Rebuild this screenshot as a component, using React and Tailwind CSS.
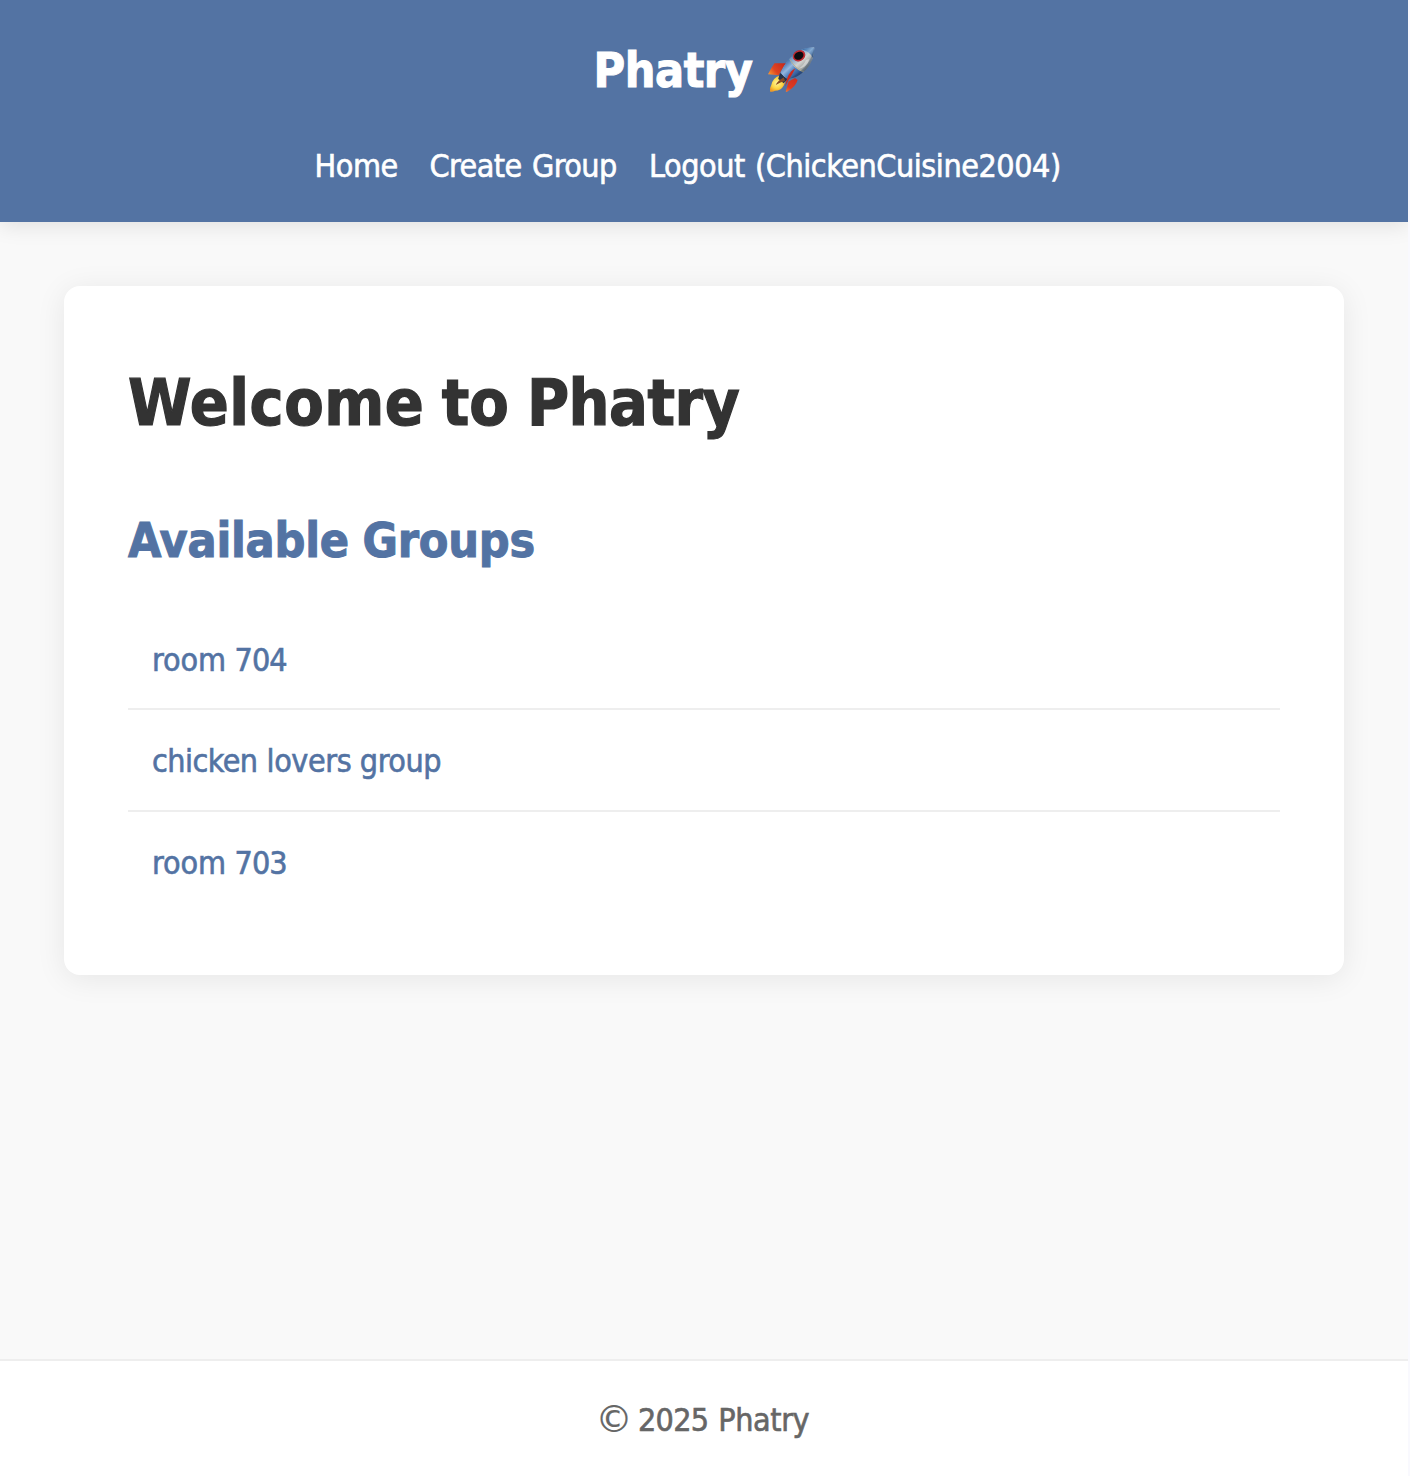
const groups = [
  {
    id: 1,
    pad: 'pt-[26px] pb-[22px]',
    words: [['room', 'tracking-[-0.1px]'], ['704', 'tracking-[-0.9px] ml-[8.5px]']],
  },
  {
    id: 2,
    pad: 'pt-[25px] pb-[23px]',
    words: [
      ['chicken', 'tracking-[-0.55px]'],
      ['lovers', 'tracking-[-0.4px] ml-[9px]'],
      ['group', 'tracking-[-0.5px] ml-[8.5px]'],
    ],
  },
  {
    id: 3,
    pad: 'pt-[25px] pb-[23px]',
    words: [['room', 'tracking-[-0.1px]'], ['703', 'tracking-[-0.9px] ml-[8.5px]']],
  },
];

function Rocket() {
  return (
    <svg viewBox="0 0 60 60" className="mt-2 ml-[7.5px] h-[60px] w-[60px] shrink-0" aria-hidden="true">
      <defs>
        <linearGradient id="hull" x1="29" y1="14" x2="46" y2="32" gradientUnits="userSpaceOnUse">
          <stop offset="0" stopColor="#3f6fa8" />
          <stop offset="0.3" stopColor="#8aacd0" />
          <stop offset="0.55" stopColor="#d2d2cf" />
          <stop offset="0.78" stopColor="#a3a7a5" />
          <stop offset="1" stopColor="#59656c" />
        </linearGradient>
        <linearGradient id="base" x1="22" y1="24" x2="35" y2="38" gradientUnits="userSpaceOnUse">
          <stop offset="0" stopColor="#3767a6" />
          <stop offset="0.4" stopColor="#94b6dd" />
          <stop offset="0.65" stopColor="#4f7fbd" />
          <stop offset="1" stopColor="#274c88" />
        </linearGradient>
        <linearGradient id="nose" x1="43" y1="7" x2="54" y2="18" gradientUnits="userSpaceOnUse">
          <stop offset="0" stopColor="#2b619f" />
          <stop offset="0.5" stopColor="#82a9d2" />
          <stop offset="1" stopColor="#2d5080" />
        </linearGradient>
        <linearGradient id="finLeft" x1="24" y1="23" x2="9" y2="35" gradientUnits="userSpaceOnUse">
          <stop offset="0" stopColor="#c62a1c" />
          <stop offset="0.6" stopColor="#df4420" />
          <stop offset="1" stopColor="#f79a35" />
        </linearGradient>
        <linearGradient id="finRight" x1="35" y1="36" x2="27" y2="52" gradientUnits="userSpaceOnUse">
          <stop offset="0" stopColor="#cf2c1f" />
          <stop offset="0.7" stopColor="#dc3a22" />
          <stop offset="1" stopColor="#ee7435" />
        </linearGradient>
        <radialGradient id="flame" cx="17" cy="43" r="9" gradientUnits="userSpaceOnUse">
          <stop offset="0" stopColor="#fff59a" />
          <stop offset="0.6" stopColor="#fbd544" />
          <stop offset="1" stopColor="#ef9a26" />
        </radialGradient>
      </defs>
      <path d="M26 23.2 L14.5 23.3 Q11 28 8 34.2 L18.8 35.3 Q21 30 26 23.2Z" fill="url(#finLeft)" />
      <path d="M35 38 L37.6 40 Q36 46.5 26.8 52 L25.7 51.6 L28.6 41.5Z" fill="url(#finRight)" />
      <path d="M20 35.5 Q13 37.5 11.3 45 Q9.5 48 10 51.4 Q12.5 52.2 15 50.8 Q21 50.8 23.8 45.5 L26 40Z" fill="url(#flame)" />
      <path d="M20 33 L28 39 L23.5 43.2 Q21 40.5 18.2 39Z" fill="#24334b" />
      <path d="M15.8 45 Q18 40 23.8 37.5 L25 41 Q20.5 42 15.8 45Z" fill="#8a4a22" />
      <path d="M54.2 7.6 Q43 7.2 34.5 14 Q26 20.5 20.8 32.5 Q23.5 37 28 39.2 Q37.5 38 46 29.5 Q54.5 20.5 54.2 7.6Z" fill="url(#hull)" />
      <path d="M29 19 Q24 25 20.8 32.5 Q23.5 37 28 39.2 Q36.5 38 42.8 32.5 Q34.5 29 29 19Z" fill="url(#base)" />
      <path d="M54.2 7.6 Q47 7.2 41.8 9.6 Q49.5 11.5 53 18 Q54.4 12.5 54.2 7.6Z" fill="url(#nose)" />
      <path d="M30 19.5 Q35 28.5 43.6 31.6" fill="none" stroke="#b9ab78" strokeWidth="0.7" />
      <path d="M46 20 Q44 25 39 28.5 Q44 28 47.5 23.5 Q49 21 49 19Z" fill="#ffffff" opacity="0.4" />
      <path d="M54 8 Q54 20.5 46 29.5 Q37.5 38 28 39.2 Q37 35 44.5 27.5 Q51.5 20 54 8Z" fill="#2c4466" opacity="0.35" />
      <ellipse cx="39" cy="15.8" rx="6.5" ry="5.3" transform="rotate(-28 39 15.8)" fill="#ad1c22" />
      <ellipse cx="39" cy="15.8" rx="5.8" ry="4.6" transform="rotate(-28 39 15.8)" fill="none" stroke="#d23c43" strokeWidth="0.6" />
      <ellipse cx="38.8" cy="15.8" rx="4.8" ry="3.8" transform="rotate(-28 38.8 15.8)" fill="#0d0c10" />
      <path d="M35.2 28.4 Q33 33 28.3 40.5 L25.2 46.5 Q26.5 37 31 31.5 Q33 29.2 35.2 28.4Z" fill="#cf2a1d" />
    </svg>
  );
}

export default function App() {
  return (
    <div className="min-h-screen bg-[#f9f9fe] font-['DejaVu_Sans_Condensed','DejaVu_Sans',sans-serif] text-[32px] leading-[52px] whitespace-nowrap">
      <div className="flex min-h-screen w-[1408px] flex-col overflow-hidden bg-[#f9f9f9]">
        <header className="h-[222px] bg-[#5373a3] pt-8 text-white shadow-[0_4px_20px_rgba(0,0,0,0.1)]">
          <h1 className="ml-[593.5px] flex h-[77px] text-5xl leading-[76px] font-bold">
            <span className="tracking-[-0.46px] [-webkit-text-stroke:1px_currentColor]">Phatry</span>
            <Rocket />
          </h1>
          <nav className="mt-[31px] ml-[314.5px] flex gap-8 [-webkit-text-stroke:0.6px_currentColor]">
            <a className="w-[83px] tracking-[-0.4px]">Home</a>
            <a className="w-[187.5px] tracking-[-0.6px] [word-spacing:2px]">Create Group</a>
            <a className="tracking-[-0.45px] [word-spacing:1.5px]">Logout (ChickenCuisine2004)</a>
          </nav>
        </header>

        <main className="mx-16 mt-16 h-[689px] rounded-2xl bg-white p-16 shadow-[0_4px_30px_rgba(0,0,0,0.08)]">
          <h1 className="mt-[3px] flex text-[64px] leading-[101px] font-bold text-[#333333] [-webkit-text-stroke:1.2px_currentColor]">
            <span className="tracking-[0.5px]">Welcome</span>
            <span className="ml-[17.5px]">to</span>
            <span className="ml-[18px] tracking-[-0.5px]">Phatry</span>
          </h1>
          <h2 className="mt-[48px] flex text-5xl leading-[76px] font-bold text-[#5373a3] [-webkit-text-stroke:1px_currentColor]">
            <span className="tracking-[-0.2px]">Available</span>
            <span className="ml-[13.5px] tracking-[-0.2px]">Groups</span>
          </h2>
          <ul className="mt-[30px] divide-y-2 divide-[#eeeeee] text-[#5373a3] [-webkit-text-stroke:0.6px_currentColor]">
            {groups.map((group) => (
              <li key={group.id} className={`flex px-6 ${group.pad}`}>
                {group.words.map(([word, cls]) => (
                  <span key={word} className={cls}>{word}</span>
                ))}
              </li>
            ))}
          </ul>
        </main>

        <footer className="mt-auto h-[117px] border-t-2 border-[#eeeeee] bg-white pt-[33px] text-[#666666] [-webkit-text-stroke:0.6px_currentColor]">
          <p className="ml-[595.5px] flex">
            <span className="w-[42.5px] font-['DejaVu_Sans'] text-[37px] [-webkit-text-stroke:0.2px_currentColor]">©</span>
            <span className="tracking-[-0.75px]">2025</span>
            <span className="ml-[10px] tracking-[-0.4px]">Phatry</span>
          </p>
        </footer>
      </div>
    </div>
  );
}
